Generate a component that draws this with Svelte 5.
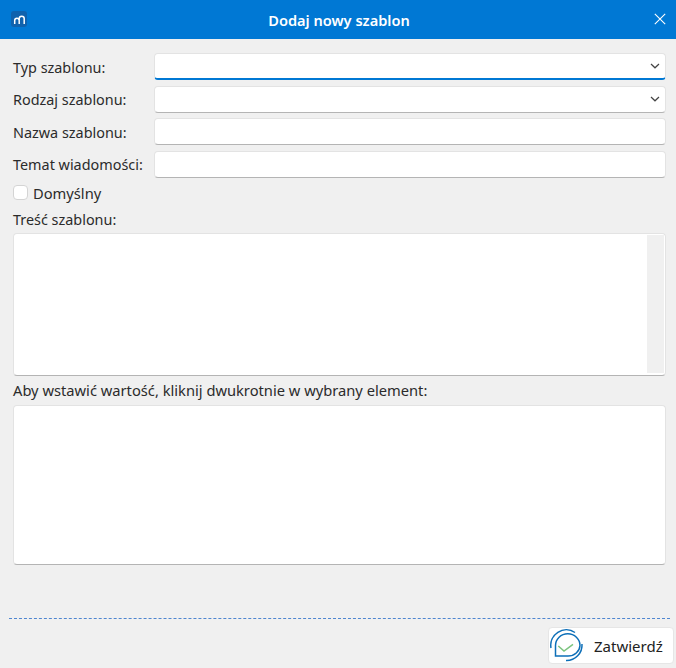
<script lang="ts">
  const fields = [
    { label: 'Typ szablonu:', select: true, active: true },
    { label: 'Rodzaj szablonu:', select: true, active: false },
    { label: 'Nazwa szablonu:', select: false, active: false },
    { label: 'Temat wiadomości:', select: false, active: false }
  ];
</script>

<div class="dialog">
  <header class="titlebar">
    <span class="logo">
      <svg width="16" height="16" viewBox="0 0 16 16" fill="none" stroke="#fff" stroke-width="1.5">
        <path d="M3.7 13V9.5C3.7 8 4.8 7.2 6 7.2C7.2 7.2 8.2 8 8.2 9.5V13" />
        <path d="M8.2 9V7.5C8.2 6 9.2 5.2 10.7 5.2C12.2 5.2 13.2 6 13.2 7.5V13" />
      </svg>
    </span>
    <h1>Dodaj nowy szablon</h1>
    <button class="close" aria-label="Zamknij">
      <svg width="12" height="12" viewBox="0 0 12 12" stroke="#fff" stroke-width="1.1">
        <path d="M0.8 0.8L11.2 11.2M11.2 0.8L0.8 11.2" />
      </svg>
    </button>
  </header>

  <main class="form">
    {#each fields as f}
      <div class="row">
        <span class="label">{f.label}</span>
        <div class="input" class:active={f.active}>
          {#if f.select}
            <svg class="chev" width="10" height="6" viewBox="0 0 10 6" fill="none" stroke="#444" stroke-width="1.2">
              <path d="M1 1L5 4.8L9 1" />
            </svg>
          {/if}
        </div>
      </div>
    {/each}

    <div class="check">
      <span class="box"></span>
      <span>Domyślny</span>
    </div>

    <div class="label content-label">Treść szablonu:</div>
    <div class="area content">
      <div class="scroll"></div>
    </div>

    <div class="label hint">Aby wstawić wartość, kliknij dwukrotnie w wybrany element:</div>
    <div class="area values"></div>
  </main>

  <footer class="footer">
    <button class="confirm">
      <svg width="34" height="34" viewBox="0 0 34 34" fill="none">
        <path d="M1 19A15.5 15.5 0 0 1 25 3.5" stroke="#0d6fb8" stroke-width="1.5" />
        <path d="M16 31.5A15.5 15.5 0 0 0 32 15" stroke="#0d6fb8" stroke-width="1.5" />
        <path d="M5.5 27V16.5A12 11.5 0 0 1 30 16.5A12 11 0 0 1 18 27H5.5Z" stroke="#0d6fb8" stroke-width="1.5" />
        <path d="M8.3 17L14 22L23 15.3" stroke="#7cc47f" stroke-width="1.5" />
      </svg>
      <span>Zatwierdź</span>
    </button>
  </footer>
</div>

<style>
  :global(body) {
    background: #f0f0f0;
  }
  .dialog {
    width: 676px;
    height: 668px;
    display: flex;
    flex-direction: column;
    background: #f0f0f0;
    font-family: 'Noto Sans', 'Open Sans', sans-serif;
    font-size: 14.4px;
    color: #2b2b2b;
    overflow: hidden;
  }
  .titlebar {
    height: 39px;
    flex: none;
    display: flex;
    align-items: center;
    justify-content: center;
    position: relative;
    padding-left: 2px;
    box-sizing: border-box;
    background: #0078d4;
  }
  .titlebar h1 {
    margin: 0;
    color: #fff;
    font-size: 14.6px;
    font-weight: 600;
  }
  .logo {
    position: absolute;
    left: 11px;
    top: 11px;
    width: 16px;
    height: 16px;
    border-radius: 3px;
    background: #1062ad;
    display: flex;
  }
  .close {
    position: absolute;
    right: 10px;
    top: 13px;
    width: 12px;
    height: 12px;
    padding: 0;
    border: 0;
    background: none;
    display: flex;
  }
  .form {
    flex: 1;
    padding: 14px 10px 0 13px;
    display: flex;
    flex-direction: column;
  }
  .row {
    display: flex;
    align-items: center;
    height: 27px;
    margin-bottom: 5.5px;
  }
  .label {
    line-height: 19px;
  }
  .row .label {
    width: 141px;
    flex: none;
    padding-top: 1px;
  }
  .input {
    flex: 1;
    height: 100%;
    box-sizing: border-box;
    position: relative;
    background: #fff;
    border: 1px solid #e3e3e3;
    border-bottom-color: #b4b4b4;
    border-radius: 4px;
  }
  .input.active {
    border-bottom: 2px solid #0078d4;
  }
  .chev {
    position: absolute;
    right: 5px;
    top: 9px;
  }
  .check {
    display: flex;
    align-items: center;
    gap: 5px;
    height: 19px;
    font-size: 14.7px;
  }
  .box {
    width: 15px;
    height: 15px;
    box-sizing: border-box;
    background: #fff;
    border: 1px solid #d4d4d4;
    border-radius: 4px;
  }
  .content-label {
    margin-top: 8px;
    height: 19px;
  }
  .area {
    box-sizing: border-box;
    background: #fff;
    border: 1px solid #e3e3e3;
    border-bottom-color: #b4b4b4;
    border-radius: 4px;
  }
  .content {
    height: 143px;
    margin-top: 4px;
    display: flex;
    justify-content: flex-end;
    padding: 1px 1px 2px 0;
  }
  .scroll {
    width: 17px;
    background: #f0f0f0;
  }
  .hint {
    margin-top: 5px;
    height: 19px;
    font-size: 14.7px;
  }
  .values {
    height: 160px;
    margin-top: 5px;
  }
  .footer {
    flex: none;
    height: 50px;
    position: relative;
    display: flex;
    justify-content: flex-end;
    align-items: flex-end;
    padding: 0 2px 4px 9px;
    box-sizing: border-box;
  }
  .footer::before {
    content: '';
    position: absolute;
    left: 9px;
    right: 6px;
    top: 0;
    border-top: 1px dashed #4f86d0;
  }
  .confirm {
    width: 126px;
    height: 37px;
    display: flex;
    align-items: center;
    gap: 10px;
    padding: 0 0 0 1px;
    background: #fff;
    border: 1px solid #e6e6e6;
    border-radius: 4px;
    font: inherit;
    font-size: 15px;
    color: #222;
  }
</style>
